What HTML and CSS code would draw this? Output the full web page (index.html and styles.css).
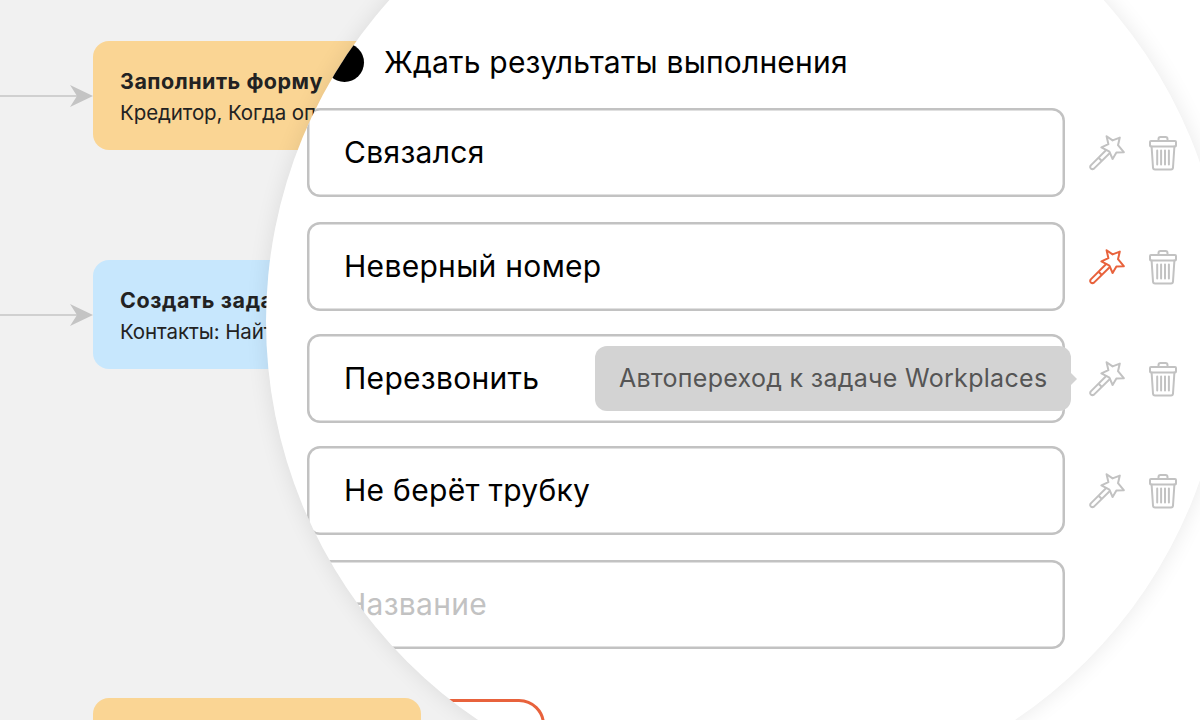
FILE: index.html
```
<!DOCTYPE html>
<html lang="ru">
<head>
    <meta charset="UTF-8">
    <meta name="viewport" content="width=device-width, initial-scale=1.0">
    <title>Результаты выполнения</title>
    <link rel="stylesheet" href="styles.css">
</head>
<body>
    <svg class="sprite">
        <symbol id="wand" viewBox="0 0 36 36">
            <path d="M17.6 1.2L23.6 5.4L30.8 2.6L29 10.2L34.8 17.2L27.4 17.6L23.6 24L20.4 16.6L12.4 12.4L19.4 9.2Z"/>
            <path d="M17.2 15L1.8 30.4Q0.6 32 1.8 33.4Q3.4 34.8 5 33.6L20.6 18.2M9.6 22.8L12.6 25.8"/>
        </symbol>
        <symbol id="trash" viewBox="0 0 30 36">
            <path d="M3 6H27Q28 6 28 7V10.5Q28 11.5 27 11.5H3Q2 11.5 2 10.5V7Q2 6 3 6ZM10.5 6V4Q10.5 2 12.5 2H17.5Q19.5 2 19.5 4V6"/>
            <path d="M3.6 11.5L5 32.5Q5.1 34.5 7 34.5H23Q24.9 34.5 25 32.5L26.4 11.5"/>
            <path d="M9.2 15.5V29.5M13.1 15.5V29.5M17 15.5V29.5M20.9 15.5V29.5"/>
        </symbol>
        <symbol id="arrow" viewBox="0 0 93 24">
            <path d="M0 12H78" stroke="#c4c4c4" stroke-width="1.6"/>
            <path d="M70 1L93 12L70 23L77 12Z" fill="#c4c4c4"/>
        </symbol>
    </svg>

    <div class="stage">
        <div class="canvas">
            <svg class="arrow arrow-form"><use href="#arrow"/></svg>
            <div class="node node-form">
                <b>Заполнить форму</b>
                <span>Кредитор, Когда оплатит</span>
            </div>
            <svg class="arrow arrow-task"><use href="#arrow"/></svg>
            <div class="node node-task">
                <b>Создать задачу</b>
                <span>Контакты: Найти номер</span>
            </div>
            <div class="node node-next"></div>
        </div>

        <div class="lens">
            <div class="title"><i class="dot"></i><span>Ждать результаты выполнения</span></div>
            <div class="results">
                <div class="row">
                    <div class="field">Связался</div>
                    <svg class="wand"><use href="#wand"/></svg>
                    <svg class="trash"><use href="#trash"/></svg>
                </div>
                <div class="row">
                    <div class="field">Неверный номер</div>
                    <svg class="wand active"><use href="#wand"/></svg>
                    <svg class="trash"><use href="#trash"/></svg>
                </div>
                <div class="row">
                    <div class="field">Перезвонить</div>
                    <svg class="wand"><use href="#wand"/></svg>
                    <svg class="trash"><use href="#trash"/></svg>
                    <div class="tooltip">Автопереход к задаче Workplaces</div>
                </div>
                <div class="row">
                    <div class="field">Не берёт трубку</div>
                    <svg class="wand"><use href="#wand"/></svg>
                    <svg class="trash"><use href="#trash"/></svg>
                </div>
                <div class="row">
                    <div class="field empty">Название</div>
                </div>
            </div>
            <div class="button"></div>
        </div>
    </div>
</body>
</html>
```
FILE: styles.css
```
body {
    margin: 0;
    font-family: Inter, "Noto Sans", sans-serif;
}
.sprite {
    display: none;
}
.stage {
    position: relative;
    width: 1200px;
    height: 720px;
    overflow: hidden;
    background-color: #fff;
}
.canvas {
    position: relative;
    width: 700px;
    height: 720px;
    background-color: #f1f1f1;
}
.arrow {
    position: absolute;
    left: 0;
    width: 93px;
    height: 24px;
}
.arrow-form {
    top: 84px;
}
.arrow-task {
    top: 303px;
}
.node {
    position: absolute;
    left: 93px;
    width: 328px;
    height: 109px;
    box-sizing: border-box;
    padding: 25px 27px;
    border-radius: 16px;
    color: #222;
    font-size: 20.5px;
    line-height: 31px;
    white-space: nowrap;
    overflow: hidden;
}
.node b, .node span {
    display: block;
}
.node b {
    font-size: 21.5px;
    letter-spacing: 0.5px;
}
.node-form {
    top: 41px;
    background-color: #fad594;
}
.node-form span {
    letter-spacing: -0.1px;
}
.node-task {
    top: 260px;
    background-color: #c7e7fd;
}
.node-task b {
    letter-spacing: 0.6px;
}
.node-task span {
    letter-spacing: -0.1px;
}
.node-next {
    top: 698px;
    background-color: #fad594;
}
.lens {
    position: absolute;
    left: 265.5px;
    top: -159.5px;
    width: 961px;
    height: 961px;
    box-sizing: border-box;
    padding: 202.5px 0 0 41.5px;
    border-radius: 50%;
    overflow: hidden;
    background-color: #fff;
    box-shadow: 0 0 22px rgba(0, 0, 0, 0.09);
}
.title {
    display: flex;
    align-items: center;
    gap: 20px;
    height: 39px;
    padding-left: 18px;
    margin-bottom: 26px;
    font-size: 30px;
    letter-spacing: 0.2px;
    line-height: 37px;
    white-space: nowrap;
}
.title span {
    padding-bottom: 1px;
}
.dot {
    width: 39px;
    height: 39px;
    border-radius: 50%;
    background-color: #000;
}
.results {
    display: grid;
    grid-template-rows: 114px 112px 112px 114px 89px;
}
.row {
    position: relative;
    display: flex;
    align-items: center;
    height: 89px;
}
.field {
    display: flex;
    align-items: center;
    width: 758px;
    height: 89px;
    box-sizing: border-box;
    padding: 0 0 1px 37px;
    border-radius: 13px;
    box-shadow: inset 0 0 0 2.5px #c2c2c2;
    font-size: 30px;
    letter-spacing: 0.3px;
    white-space: nowrap;
}
.empty {
    color: #c2c2c2;
}
.wand, .trash {
    fill: none;
    stroke: #c2c2c2;
    stroke-width: 2;
    stroke-linejoin: round;
    stroke-linecap: round;
}
.wand {
    width: 36px;
    height: 36px;
    margin-left: 24px;
}
.active {
    stroke: #e8623c;
}
.trash {
    width: 30px;
    height: 36px;
    margin-left: 23px;
}
.tooltip {
    position: absolute;
    left: 288px;
    top: 12px;
    width: 476px;
    height: 65px;
    box-sizing: border-box;
    padding-left: 24px;
    border-radius: 12px;
    background-color: #d3d3d3;
    color: #555;
    font-size: 25px;
    letter-spacing: 0.3px;
    line-height: 65px;
    white-space: nowrap;
}
.tooltip::after {
    content: "";
    position: absolute;
    left: 100%;
    top: 27px;
    border: 6px solid transparent;
    border-left-color: #d3d3d3;
    border-right: none;
}
.button {
    width: 238px;
    height: 90px;
    box-sizing: border-box;
    margin-top: 50px;
    border: 3px solid #e8623c;
    border-radius: 26px;
}
```
